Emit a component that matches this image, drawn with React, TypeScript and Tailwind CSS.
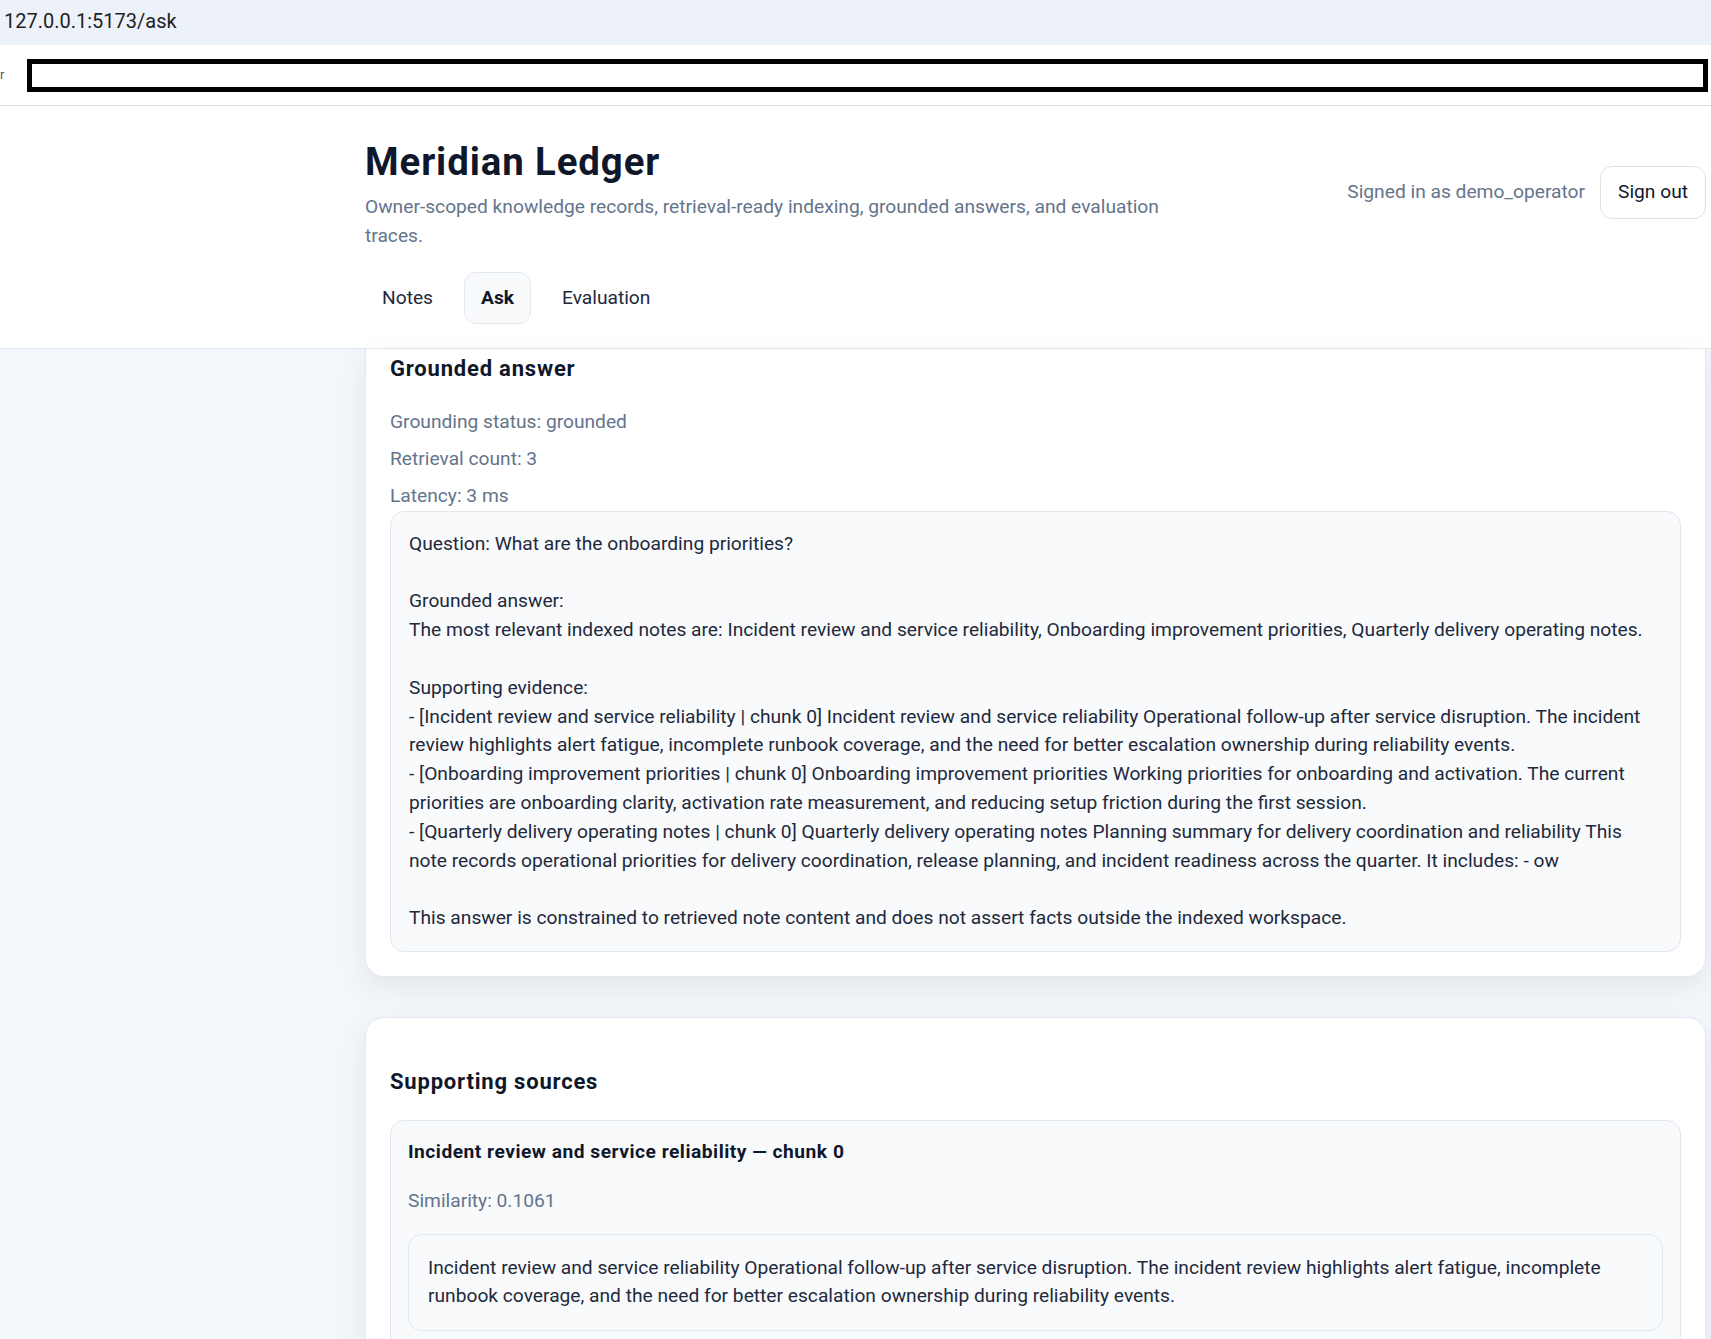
import React from 'react'

const answerText = `Question: What are the onboarding priorities?

Grounded answer:
The most relevant indexed notes are: Incident review and service reliability, Onboarding improvement priorities, Quarterly delivery operating notes.

Supporting evidence:
- [Incident review and service reliability | chunk 0] Incident review and service reliability Operational follow-up after service disruption. The incident
review highlights alert fatigue, incomplete runbook coverage, and the need for better escalation ownership during reliability events.
- [Onboarding improvement priorities | chunk 0] Onboarding improvement priorities Working priorities for onboarding and activation. The current
priorities are onboarding clarity, activation rate measurement, and reducing setup friction during the first session.
- [Quarterly delivery operating notes | chunk 0] Quarterly delivery operating notes Planning summary for delivery coordination and reliability This
note records operational priorities for delivery coordination, release planning, and incident readiness across the quarter. It includes: - ow

This answer is constrained to retrieved note content and does not assert facts outside the indexed workspace.`

const App = () => {
    return (
        <div className="min-h-screen bg-[#f3f6fa] font-['Roboto',sans-serif] text-[#1e293b]">
            {/* browser address strip */}
            <div className="flex h-[45px] items-center bg-[#edf1f9] pb-[4px] pl-[4px] text-[20px] text-[#1f1f1f]">127.0.0.1:5173/ask</div>
            <div className="flex h-[61px] items-center border-b border-[#dedede] bg-white">
                <span className="w-[27px] text-[13px] text-[#555555]">r</span>
                <div className="h-[33px] w-[1681px] border-[5px] border-black bg-white" />
            </div>

            <header className="border-b border-[#e2e8f0] bg-white pb-[24px] pl-[365px] pr-[5px] pt-[33px]">
                <div className="flex items-start justify-between">
                    <div>
                        <h1 className="text-[38.4px] font-bold leading-[46px] tracking-[0.9px] text-[#0f172a]">Meridian Ledger</h1>
                        <p className="mt-[8px] text-[19.2px] leading-[28.8px] text-[#64748b]">
                            Owner-scoped knowledge records, retrieval-ready indexing, grounded answers, and evaluation
                            <br />
                            traces.
                        </p>
                    </div>
                    <div className="mt-[27px] flex items-center gap-[15px]">
                        <span className="text-[19.2px] text-[#64748b]">Signed in as demo_operator</span>
                        <button type="button" className="h-[53px] rounded-[12px] border border-[#dbe2ea] bg-white px-[17px] text-[19.2px] text-[#0f172a]">
                            Sign out
                        </button>
                    </div>
                </div>
                <nav className="mt-[21px] flex items-center gap-[14px] text-[19.2px] leading-[28.8px]">
                    <a className="rounded-[12px] border border-transparent px-[16px] py-[11px] text-[#1e293b]">Notes</a>
                    <a className="rounded-[12px] border border-[#e2e8f0] bg-[#f8fafc] px-[16px] py-[11px] font-bold text-[#0f172a]">Ask</a>
                    <a className="rounded-[12px] border border-transparent px-[16px] py-[11px] text-[#1e293b]">Evaluation</a>
                </nav>
            </header>

            <main className="pb-[40px] pl-[365px] pr-[5px]">
                <section className="rounded-b-[19px] border border-t-0 border-[#e2e8f0] bg-white px-[24px] pb-[24px] pt-[6px] shadow-[0_10px_30px_rgba(15,23,42,0.07)]">
                    <h2 className="text-[22px] font-bold leading-[28px] tracking-[0.8px] text-[#0f172a]">Grounded answer</h2>
                    <div className="mt-[25px] flex flex-col gap-[8px] text-[19.2px] leading-[28.8px] text-[#64748b]">
                        <p>Grounding status: grounded</p>
                        <p>Retrieval count: 3</p>
                        <p>Latency: 3 ms</p>
                    </div>
                    <pre className="whitespace-pre rounded-[14px] border border-[#e2e8f0] bg-[#f8fafc] p-[18px] font-['Roboto',sans-serif] text-[19.2px] leading-[28.8px] text-[#1e293b]">
                        {answerText}
                    </pre>
                </section>

                <section className="mt-[40px] rounded-[19px] border border-[#e2e8f0] bg-white px-[24px] pb-[24px] pt-[50px] shadow-[0_10px_30px_rgba(15,23,42,0.07)]">
                    <h2 className="text-[22px] font-bold leading-[28px] tracking-[0.8px] text-[#0f172a]">Supporting sources</h2>
                    <div className="mt-[24px] rounded-[14px] border border-[#e2e8f0] bg-[#f8fafc] p-[17px]">
                        <h3 className="text-[19.2px] font-bold leading-[28.8px] tracking-[0.5px] text-[#0f172a]">Incident review and service reliability — chunk 0</h3>
                        <p className="mt-[20px] text-[19.2px] leading-[28.8px] text-[#64748b]">Similarity: 0.1061</p>
                        <div className="mt-[18px] rounded-[14px] border border-[#e2e8f0] bg-[#f8fafc] p-[19px] text-[19.2px] leading-[28.8px] text-[#1e293b]">
                            Incident review and service reliability Operational follow-up after service disruption. The incident review highlights alert fatigue, incomplete
                            <br />
                            runbook coverage, and the need for better escalation ownership during reliability events.
                        </div>
                    </div>
                </section>
            </main>
        </div>
    )
}

export default App
